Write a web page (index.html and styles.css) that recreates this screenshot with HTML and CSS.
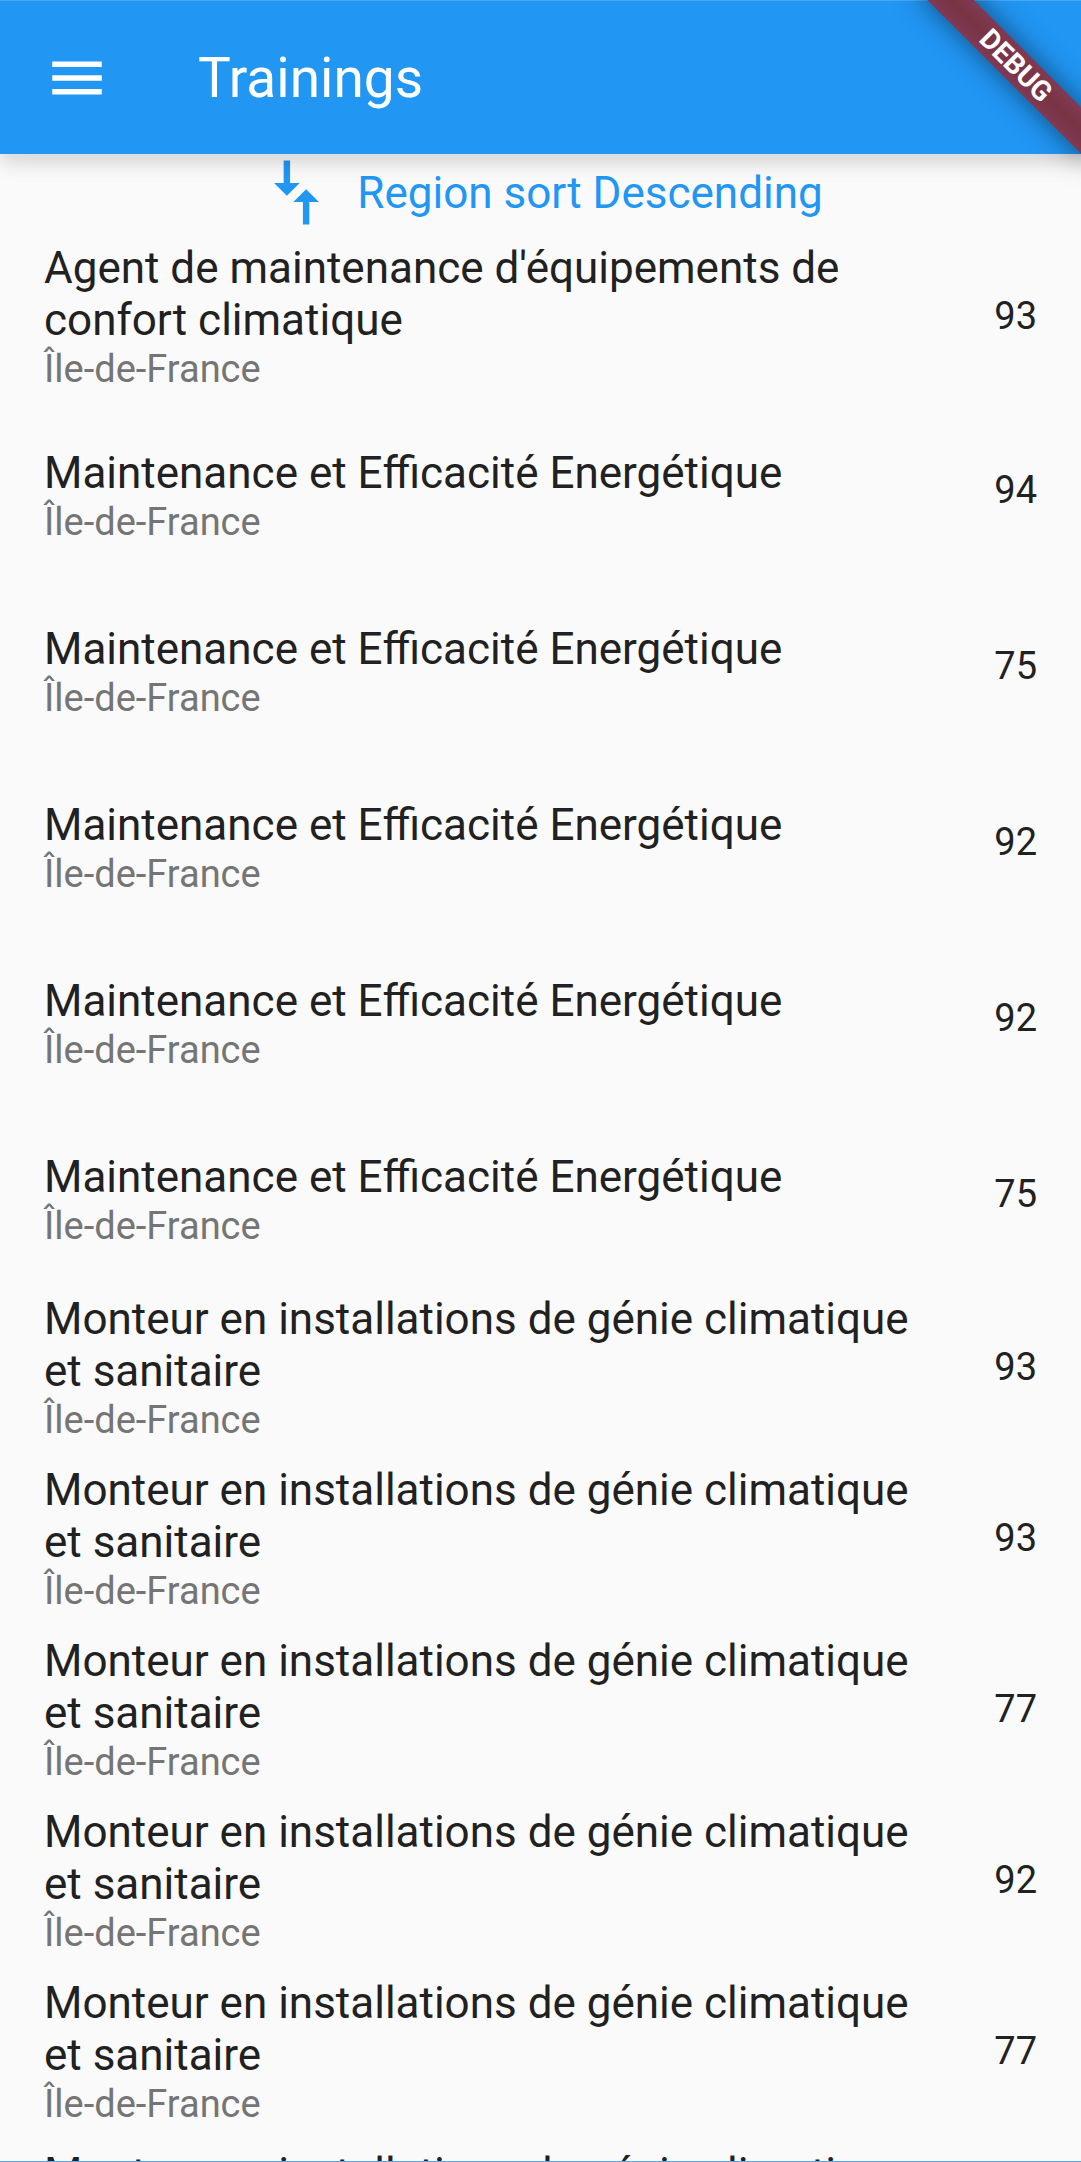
FILE: index.html
```html
<!DOCTYPE html>
<html lang="fr">
<head>
<meta charset="utf-8">
<meta name="viewport" content="width=device-width, initial-scale=1">
<title>Trainings</title>
<link rel="stylesheet" href="styles.css">
</head>
<body>
<div class="screen">
  <header class="app-bar">
    <button class="menu-button" type="button" aria-label="Open navigation menu">
      <svg class="menu-icon" viewBox="0 0 24 24" aria-hidden="true"><path d="M3 18h18v-2H3v2zm0-5h18v-2H3v2zm0-7v2h18V6H3z"/></svg>
    </button>
    <h1 class="app-title">Trainings</h1>
  </header>
  <div class="banner-corner"><div class="banner">DEBUG</div></div>
  <main class="content">
    <button class="sort-button" type="button">
      <svg class="sort-icon" viewBox="0 0 24 24" aria-hidden="true"><path transform="rotate(90 12 12)" d="M9.01 14H2v2h7.01v3L13 15l-3.99-4v3zm5.98-1v-3H22V8h-7.01V5L11 9l3.99 4z"/></svg>
      <span>Region sort Descending</span>
    </button>
    <ul class="list">
      <li class="tile tile-tall"><div class="tile-text"><h2 class="tile-title">Agent de maintenance d'équipements de confort climatique</h2><p class="tile-region">Île-de-France</p></div><span class="tile-code">93</span></li>
      <li class="tile"><div class="tile-text"><h2 class="tile-title">Maintenance et Efficacité Energétique</h2><p class="tile-region">Île-de-France</p></div><span class="tile-code">94</span></li>
      <li class="tile"><div class="tile-text"><h2 class="tile-title">Maintenance et Efficacité Energétique</h2><p class="tile-region">Île-de-France</p></div><span class="tile-code">75</span></li>
      <li class="tile"><div class="tile-text"><h2 class="tile-title">Maintenance et Efficacité Energétique</h2><p class="tile-region">Île-de-France</p></div><span class="tile-code">92</span></li>
      <li class="tile"><div class="tile-text"><h2 class="tile-title">Maintenance et Efficacité Energétique</h2><p class="tile-region">Île-de-France</p></div><span class="tile-code">92</span></li>
      <li class="tile"><div class="tile-text"><h2 class="tile-title">Maintenance et Efficacité Energétique</h2><p class="tile-region">Île-de-France</p></div><span class="tile-code">75</span></li>
      <li class="tile tile-tall"><div class="tile-text"><h2 class="tile-title">Monteur en installations de génie climatique et sanitaire</h2><p class="tile-region">Île-de-France</p></div><span class="tile-code">93</span></li>
      <li class="tile tile-tall"><div class="tile-text"><h2 class="tile-title">Monteur en installations de génie climatique et sanitaire</h2><p class="tile-region">Île-de-France</p></div><span class="tile-code">93</span></li>
      <li class="tile tile-tall"><div class="tile-text"><h2 class="tile-title">Monteur en installations de génie climatique et sanitaire</h2><p class="tile-region">Île-de-France</p></div><span class="tile-code">77</span></li>
      <li class="tile tile-tall"><div class="tile-text"><h2 class="tile-title">Monteur en installations de génie climatique et sanitaire</h2><p class="tile-region">Île-de-France</p></div><span class="tile-code">92</span></li>
      <li class="tile tile-tall"><div class="tile-text"><h2 class="tile-title">Monteur en installations de génie climatique et sanitaire</h2><p class="tile-region">Île-de-France</p></div><span class="tile-code">77</span></li>
      <li class="tile tile-tall"><div class="tile-text"><h2 class="tile-title">Monteur en installations de génie climatique et sanitaire</h2><p class="tile-region">Île-de-France</p></div><span class="tile-code">93</span></li>
    </ul>
  </main>
</div>
</body>
</html>
```
FILE: styles.css
```css
* {
  box-sizing: border-box;
  margin: 0;
  padding: 0;
}

body {
  background: #fafafa;
  color: #212121;
  font-family: Roboto, "Noto Sans", sans-serif;
}

button {
  border: 0;
  background: none;
  font: inherit;
  cursor: pointer;
}

.screen {
  position: relative;
  display: flex;
  flex-direction: column;
  height: 100vh;
  overflow: hidden;
  border-bottom: 1px solid #5aa9e6;
}

.app-bar {
  position: relative;
  z-index: 1;
  display: flex;
  flex: none;
  align-items: center;
  gap: 88px;
  height: 154px;
  padding: 0 44px;
  border-top: 1px solid #4aa8f5;
  background: #2196f3;
  color: #fff;
  box-shadow: 0 11px 14px rgba(0, 0, 0, 0.07), 0 3px 28px rgba(0, 0, 0, 0.1);
}

.menu-button,
.menu-icon {
  display: block;
  width: 66px;
  height: 66px;
  fill: #fff;
}

.app-title {
  font-size: 55px;
  font-weight: 400;
  line-height: 66px;
}

/* Diagonal ribbon over the top right corner */
.banner-corner {
  position: absolute;
  z-index: 2;
  top: 0;
  right: 0;
  width: 220px;
  height: 220px;
  overflow: hidden;
  pointer-events: none;
}

.banner {
  position: absolute;
  top: 49px;
  left: 35px;
  width: 240px;
  height: 33px;
  transform: rotate(45deg);
  background: linear-gradient(#803a54, #783344 50%, #803a54);
  box-shadow: 0 0 28px rgba(0, 0, 0, 0.5);
  color: #fff;
  font-size: 28px;
  font-weight: 700;
  line-height: 33px;
  text-align: center;
}

.content {
  flex: 1;
  min-height: 0;
  overflow: hidden;
}

.sort-button {
  display: flex;
  align-items: center;
  justify-content: center;
  gap: 22px;
  width: 100%;
  height: 77px;
  color: #2196f3;
  font-size: 44px;
  line-height: 52px;
}

.sort-icon {
  width: 77px;
  height: 77px;
  fill: #2196f3;
}

.list {
  list-style: none;
}

.tile {
  display: flex;
  gap: 44px;
  min-height: 176px;
  padding: 45px 44px 0;
}

.tile-tall {
  min-height: 171px;
  padding-top: 11px;
}

.tile-text {
  flex: 1;
}

.tile-title {
  font-size: 44px;
  font-weight: 400;
  line-height: 52px;
}

.tile-region {
  margin-top: 1px;
  color: #757575;
  font-size: 38px;
  line-height: 45px;
}

.tile-code {
  margin-top: 21px;
  font-size: 38px;
  line-height: 45px;
}

.tile-tall .tile-code {
  margin-top: 52px;
}
```
